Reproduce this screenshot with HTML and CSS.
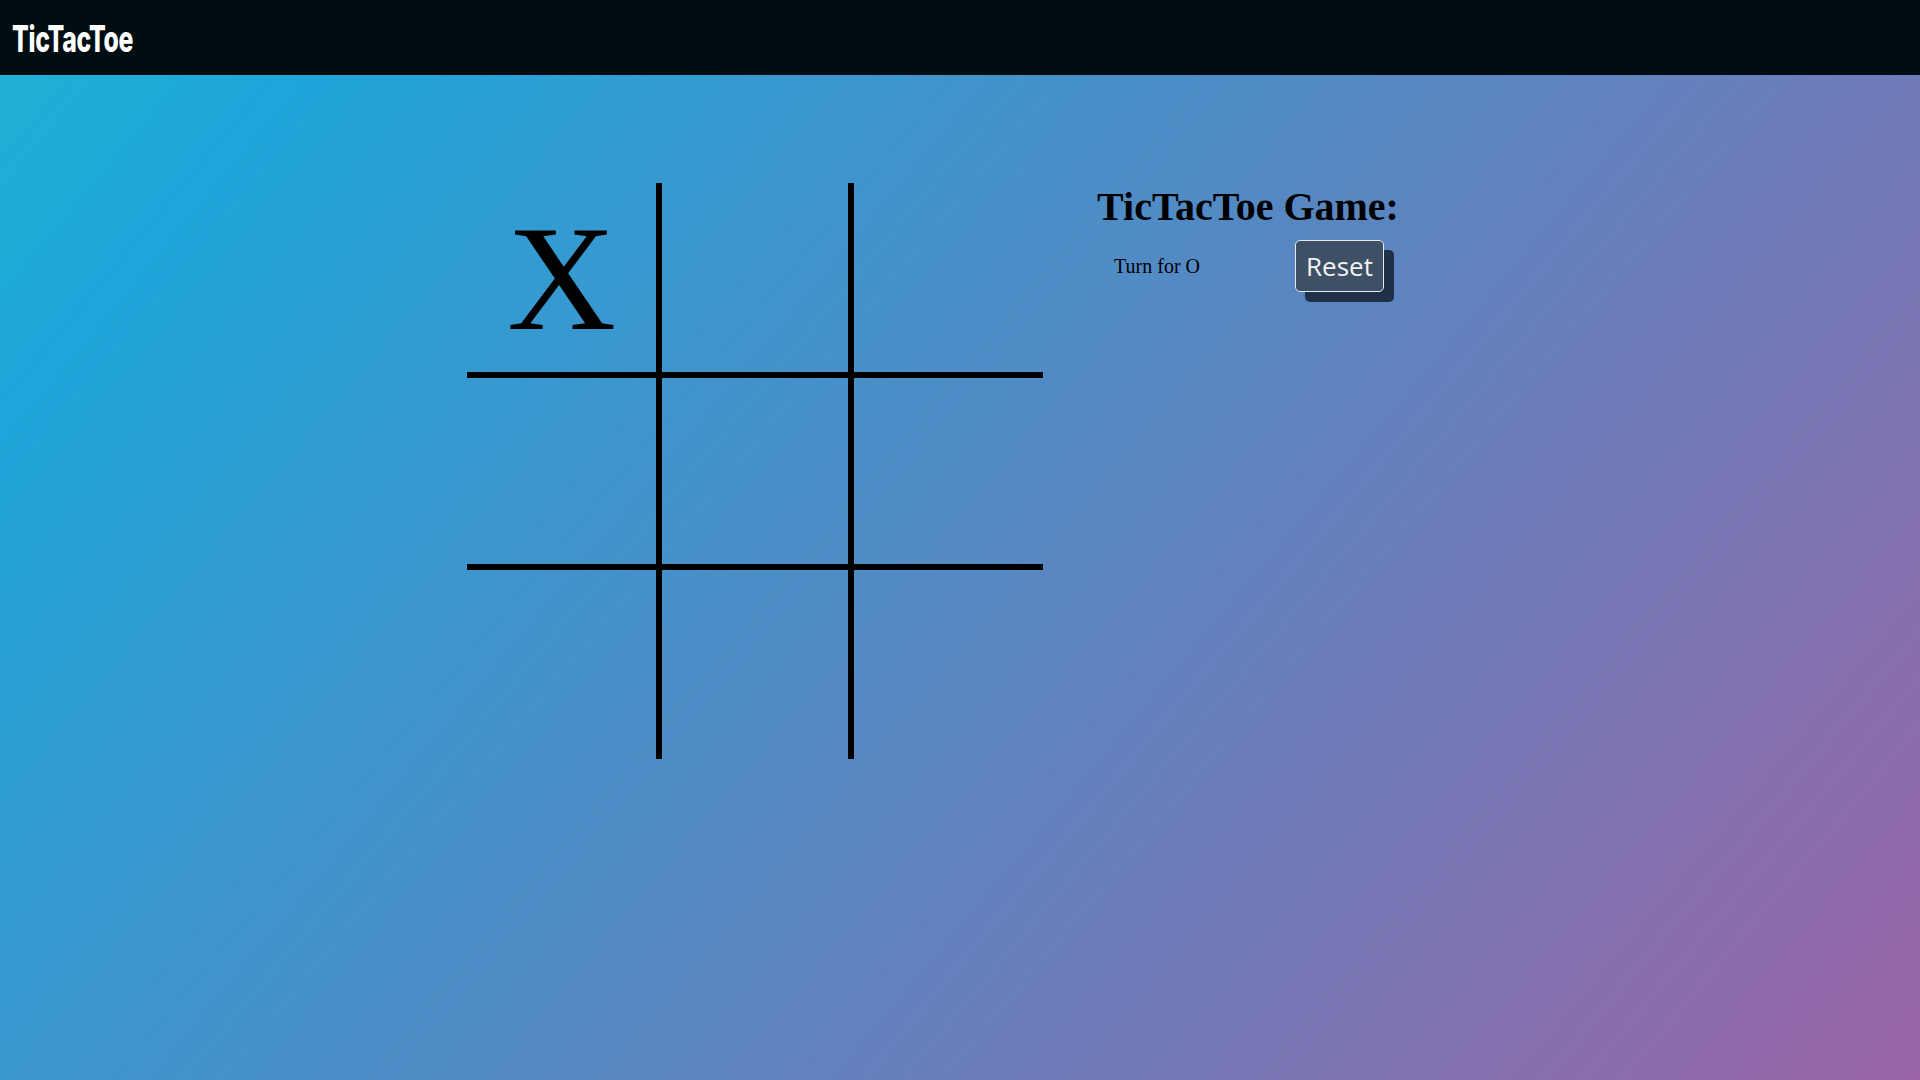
FILE: index.html
```html
<!DOCTYPE html>
<html lang="en">
<head>
<meta charset="UTF-8">
<title>TicTacToe</title>
<link rel="stylesheet" href="styles.css">
</head>
<body>
<nav class="navbar">
  <span class="logo">TicTacToe</span>
</nav>
<main class="game-container">
  <div class="board">
    <div class="box"><span class="box-text">X</span></div>
    <div class="box"><span class="box-text"></span></div>
    <div class="box"><span class="box-text"></span></div>
    <div class="box"><span class="box-text"></span></div>
    <div class="box"><span class="box-text"></span></div>
    <div class="box"><span class="box-text"></span></div>
    <div class="box"><span class="box-text"></span></div>
    <div class="box"><span class="box-text"></span></div>
    <div class="box"><span class="box-text"></span></div>
  </div>
  <div class="game-info">
    <h1 class="title">TicTacToe Game:</h1>
    <div class="controls">
      <span class="turn">Turn for O</span>
      <button class="reset">Reset</button>
    </div>
  </div>
</main>
</body>
</html>
```
FILE: styles.css
```css
html, body {
  margin: 0;
  padding: 0;
}
body {
  min-height: 100vh;
  font-family: "Liberation Serif", "Times New Roman", serif;
  background: linear-gradient(130deg, #22b2d2 0%, #1ea6da 12%, #9a64a6 100%);
}
.navbar {
  height: 75px;
  background: #010d10;
  display: flex;
  align-items: center;
  padding: 0 12px;
}
.logo {
  display: inline-block;
  color: #ffffff;
  font-family: "Inter", "Roboto", sans-serif;
  font-weight: 800;
  font-size: 37px;
  letter-spacing: -0.5px;
  transform: scaleX(0.67);
  transform-origin: left center;
  margin-top: 2px;
}
.game-container {
  display: flex;
  justify-content: center;
  margin-top: 108px;
}
.board {
  display: grid;
  grid-template-columns: repeat(3, 192px);
  grid-template-rows: repeat(3, 192px);
}
.box {
  box-sizing: border-box;
  display: flex;
  justify-content: center;
  align-items: center;
  font-size: 151px;
  border: 3px solid #000;
}
.box:nth-child(-n+3) { border-top: 0; }
.box:nth-child(n+7) { border-bottom: 0; }
.box:nth-child(3n+1) { border-left: 0; }
.box:nth-child(3n) { border-right: 0; }
.box-text {
  color: #000;
}
.game-info {
  padding: 0 54px;
}
.title {
  margin: 0 0 10px 0;
  font-size: 40px;
  font-weight: bold;
  color: #000;
  white-space: nowrap;
}
.controls {
  display: flex;
  align-items: center;
}
.turn {
  font-size: 20px;
  margin-left: 17px;
  margin-top: 1px;
  color: #000;
}
.reset {
  margin-left: 95px;
  font-family: "Open Sans", sans-serif;
  font-size: 26px;
  line-height: 34px;
  padding: 8px 10px;
  color: #f2f2f2;
  background: #3e5065;
  border: 1.5px solid #e6e9ee;
  border-radius: 5px;
  box-shadow: 10px 10px 0 0 #1f3146;
  cursor: pointer;
}
```
